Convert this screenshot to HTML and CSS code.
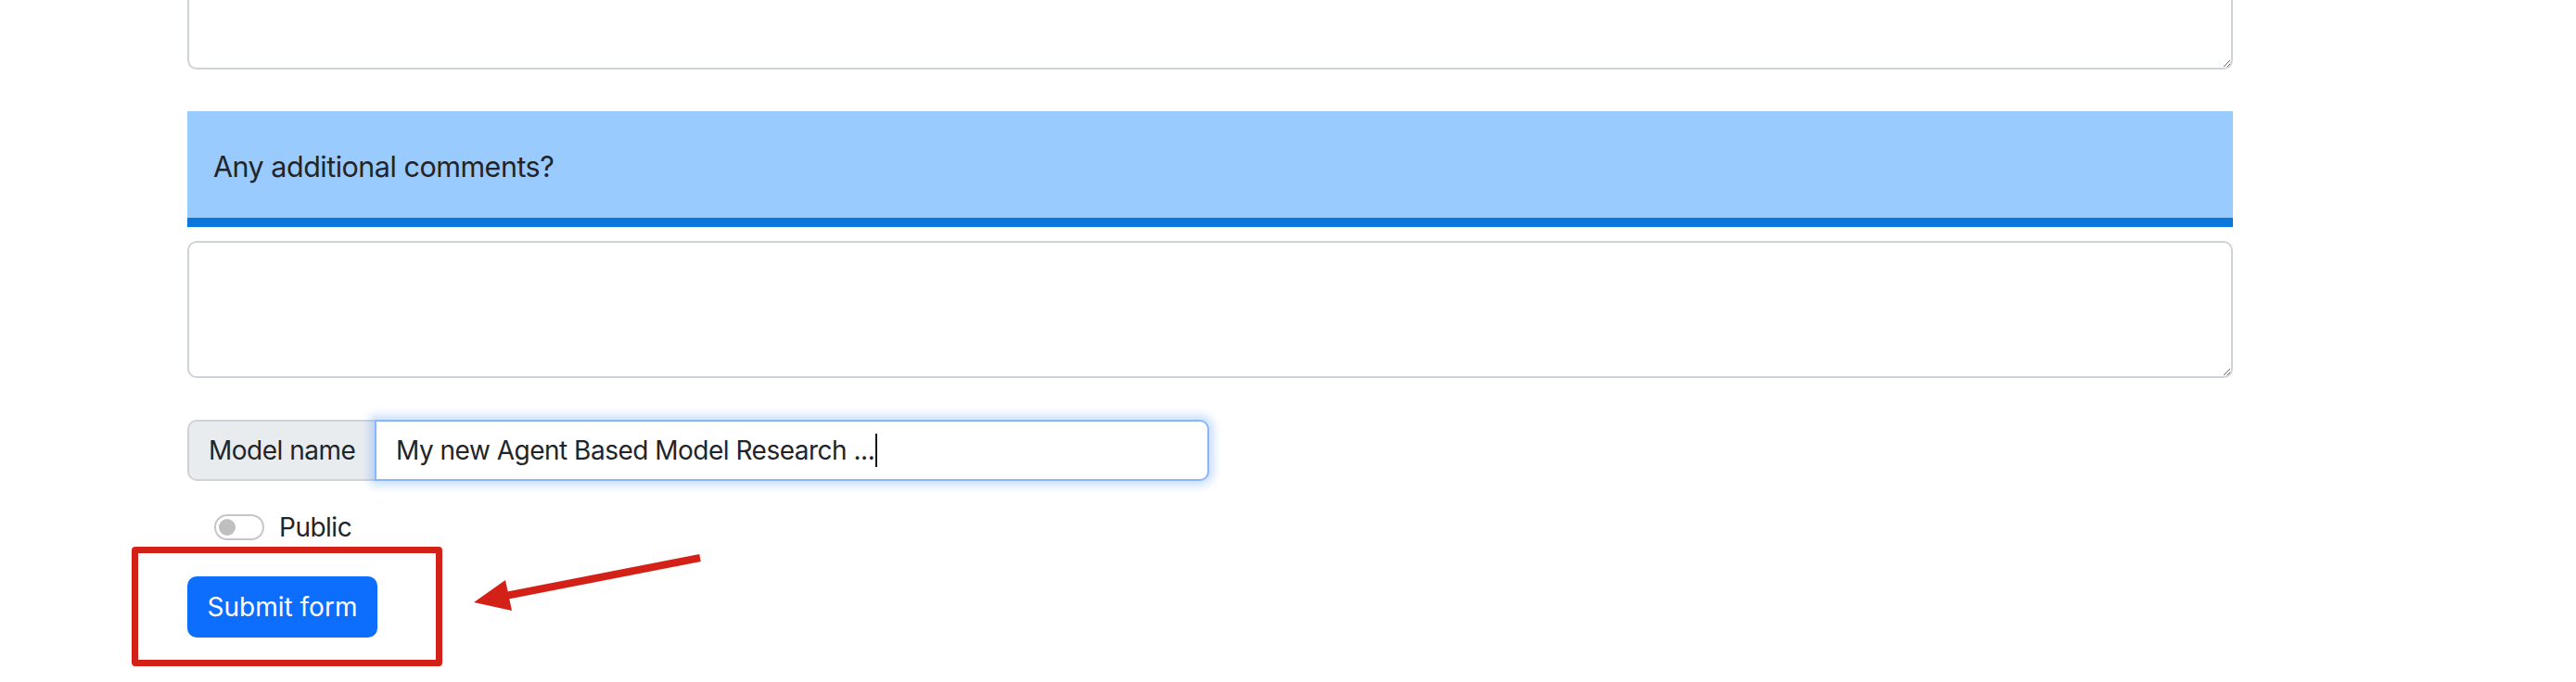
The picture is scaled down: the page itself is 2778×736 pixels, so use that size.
FILE: index.html
```html
<!DOCTYPE html>
<html lang="en">
<head>
<meta charset="utf-8">
<title>Form</title>
<link rel="stylesheet" href="styles.css">
</head>
<body>
<main class="page">
  <textarea class="field field-top" aria-label="Previous answer"></textarea>
  <div class="section-header">Any additional comments?</div>
  <textarea class="field field-comments" aria-label="Any additional comments?"></textarea>

  <div class="input-group">
    <span class="input-label">Model name</span>
    <div class="input-box"><span class="input-text">My new Agent Based Model Research ...</span><span class="caret"></span></div>
  </div>

  <div class="switch-row">
    <span class="switch"><span class="knob"></span></span>
    <span class="switch-label">Public</span>
  </div>

  <button class="btn-submit" type="button">Submit form</button>

  <div class="highlight-box"></div>
  <svg class="arrow" width="2778" height="736" viewBox="0 0 2778 736" aria-hidden="true">
    <line x1="755" y1="602" x2="540" y2="644" stroke="#d42117" stroke-width="8"/>
    <polygon points="511,650 545,626 552,659" fill="#d42117"/>
  </svg>
</main>
</body>
</html>
```

FILE: styles.css
```css
html, body {
  margin: 0;
  padding: 0;
  background: #ffffff;
}

body {
  width: 2778px;
  height: 736px;
  overflow: hidden;
  font-family: "Inter", "Liberation Sans", sans-serif;
  font-size: 28px;
  letter-spacing: -0.5px;
  color: #212529;
}

.page {
  position: relative;
  width: 2206px;
  height: 736px;
  padding-left: 202px;
  display: flex;
  flex-direction: column;
  align-items: flex-start;
}

.field {
  box-sizing: border-box;
  width: 2206px;
  border: 2px solid #ced3d9;
  border-radius: 10px;
  background: #ffffff;
  resize: vertical;
  font: inherit;
  margin: 0;
  display: block;
}

.field-top {
  height: 120px;
  margin-top: -45px;
}

.section-header {
  box-sizing: border-box;
  width: 2206px;
  margin-top: 45px;
  padding: 39px 28px 34px;
  line-height: 42px;
  font-size: 30.5px;
  background: #99cbff;
  border-bottom: 10px solid #0c77db;
}

.field-comments {
  margin-top: 15px;
  height: 148px;
}

.input-group {
  margin-top: 45px;
  display: flex;
  height: 66px;
}

.input-label {
  box-sizing: border-box;
  width: 202px;
  display: flex;
  align-items: center;
  padding: 0 21px;
  background: #e9ecef;
  border: 2px solid #ced3d9;
  border-right: none;
  border-radius: 10px 0 0 10px;
  line-height: 42px;
  white-space: nowrap;
}

.input-box {
  box-sizing: border-box;
  width: 900px;
  display: flex;
  align-items: center;
  padding: 0 21px;
  border: 2px solid #86b7fe;
  border-radius: 0 10px 10px 0;
  background: #ffffff;
  box-shadow: 0 0 10px 5px rgba(13, 110, 253, 0.22);
  white-space: nowrap;
}

.caret {
  display: inline-block;
  width: 2px;
  height: 36px;
  margin-left: 1px;
  background: #111;
}

.switch-row {
  margin-top: 29px;
  height: 42px;
  display: flex;
  align-items: center;
  padding-left: 29px;
  line-height: 42px;
}

.switch {
  box-sizing: border-box;
  width: 54px;
  height: 28px;
  border: 2px solid #c6c6c6;
  border-radius: 14px;
  display: flex;
  align-items: center;
  padding-left: 3px;
}

.knob {
  width: 18px;
  height: 18px;
  border-radius: 50%;
  background: #bfbfbf;
}

.switch-label {
  margin-left: 16px;
}

.btn-submit {
  margin-top: 32px;
  height: 66px;
  width: 205px;
  padding: 0;
  border: none;
  border-radius: 10px;
  background: #0d6efd;
  color: #ffffff;
  font: inherit;
  font-size: 28px;
  line-height: 42px;
}

.highlight-box {
  position: absolute;
  left: 142px;
  top: 590px;
  width: 335px;
  height: 129px;
  box-sizing: border-box;
  border: 7px solid #d42117;
  border-radius: 4px;
}

.arrow {
  position: absolute;
  left: 0;
  top: 0;
  pointer-events: none;
}
```
